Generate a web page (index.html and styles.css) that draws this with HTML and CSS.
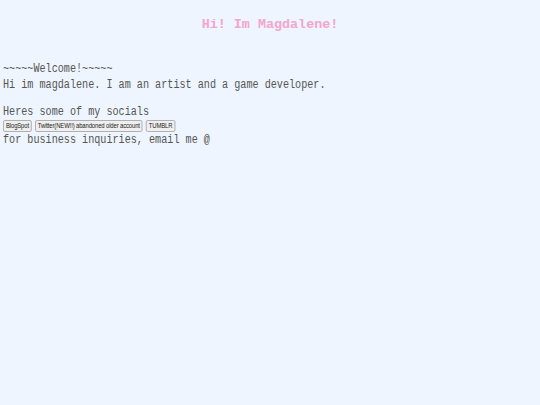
FILE: index.html
```html
<!DOCTYPE html>
<html>
<head>
<meta charset="utf-8">
<link rel="stylesheet" href="styles.css">
</head>
<body>
<h1 class="title">Hi! Im Magdalene!</h1>
<div class="content">
  <p class="intro">~~~~~Welcome!~~~~~<br>Hi im magdalene. I am an artist and a game developer.</p>
  <p class="socials">Heres some of my socials</p>
  <div class="buttons">
    <button class="btn">BlogSpot</button>
    <button class="btn">Twitter(NEW!!) abandoned older account</button>
    <button class="btn">TUMBLR</button>
  </div>
  <p class="contact">for business inquiries, email me @</p>
</div>
</body>
</html>
```
FILE: styles.css
```css
html, body {
  margin: 0;
  padding: 0;
  background: #eef5fe;
}
body {
  padding: 0 3px;
  font-family: "Liberation Mono", monospace;
  color: #555555;
}
.title {
  margin: 0;
  padding-top: 16px;
  height: 46px;
  box-sizing: border-box;
  text-align: center;
  font-size: 13.4px;
  font-weight: bold;
  color: #f4a4cf;
  line-height: 18px;
}
.content {
  font-size: 12px;
  line-height: 16px;
  transform: scaleX(0.845);
  transform-origin: 0 0;
}
.intro {
  margin: 15px 0 0;
}
.socials {
  margin: 11px 0 0;
}
.buttons {
  display: flex;
  gap: 3.5px;
  margin: 0;
}
.btn {
  font-family: "Liberation Sans", Arial, sans-serif;
  font-size: 7px;
  letter-spacing: -0.15px;
  color: #222;
  background: #efefef;
  border: 1px solid #aaa;
  border-radius: 2px;
  padding: 0 2.5px;
  height: 12px;
  line-height: 10px;
}
.contact {
  margin: 0;
}
```
